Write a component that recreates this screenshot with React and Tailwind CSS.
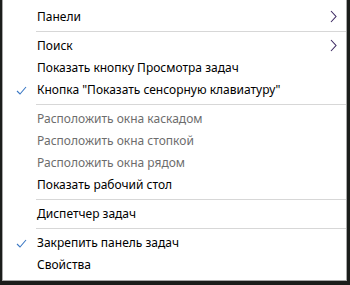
// Taskbar context menu (Windows 10 style)
const items = [
  { label: 'Панели', arrow: true },
  { sep: true },
  { label: 'Поиск', arrow: true },
  { label: 'Показать кнопку Просмотра задач' },
  { label: 'Кнопка "Показать сенсорную клавиатуру"', checked: true },
  { sep: true },
  { label: 'Расположить окна каскадом', disabled: true },
  { label: 'Расположить окна стопкой', disabled: true },
  { label: 'Расположить окна рядом', disabled: true },
  { label: 'Показать рабочий стол' },
  { sep: true },
  { label: 'Диспетчер задач' },
  { sep: true },
  { label: 'Закрепить панель задач', checked: true },
  { label: 'Свойства' },
];

function Check() {
  return (
    <svg width="11" height="9" viewBox="0 0 11 9" className="block">
      <path d="M1 5 L4 8 L10 1" fill="none" stroke="#3b78c4" strokeWidth="1.1" />
    </svg>
  );
}

function Chevron() {
  return (
    <svg width="7" height="13" viewBox="0 0 7 13" className="block">
      <path d="M1 1 L6 6.5 L1 12" fill="none" stroke="#3d2a63" strokeWidth="1.1" />
    </svg>
  );
}

export default function App() {
  return (
    <div className="w-[350px] h-[285px] bg-[#1b1d1b] overflow-hidden">
      <div className="ml-[2px] w-[345px] h-[281px] bg-white border-l border-r border-b border-[#a8a8a8] pt-[6px] font-['Segoe_UI','Noto_Sans',sans-serif] text-[12px] text-black">
        {items.map((it, i) =>
          it.sep ? (
            <div key={i} className="h-[7px] flex items-center pl-[33px]">
              <div className="w-full h-px bg-[#d7d7d7]" />
            </div>
          ) : (
            <div key={i} className="h-[22px] flex items-center relative">
              <div className="w-[34px] flex justify-center pl-[2px]">
                {it.checked && <Check />}
              </div>
              <span className={it.disabled ? 'text-[#6d6d6d] leading-none' : 'leading-none'}>{it.label}</span>
              {it.arrow && (
                <div className="absolute left-[327px] top-[4px]">
                  <Chevron />
                </div>
              )}
            </div>
          )
        )}
      </div>
    </div>
  );
}
